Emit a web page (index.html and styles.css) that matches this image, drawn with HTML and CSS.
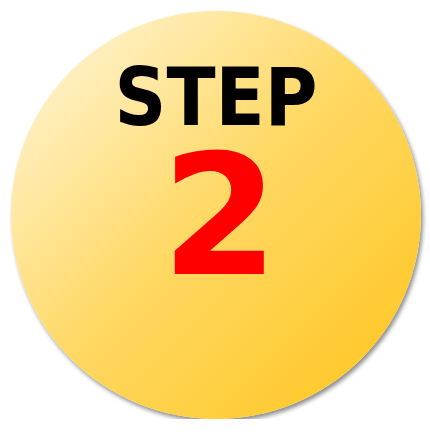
FILE: index.html
```html
<!DOCTYPE html>
<html lang="en">
<head>
    <meta charset="UTF-8">
    <meta name="viewport" content="width=device-width, initial-scale=1.0">
    <title>Step 2</title>
    <link rel="stylesheet" href="styles.css">
</head>
<body>
    <div class="badge">
        <span class="badge-label">STEP</span>
        <span class="badge-number">2</span>
    </div>
</body>
</html>
```

FILE: styles.css
```css
body {
    margin: 0;
    background-color: #ffffff;
    font-family: "DejaVu Sans", sans-serif;
    font-weight: bold;
}

.badge {
    margin: 11px 0 0 11px;
    width: 410px;
    height: 408px;
    border-radius: 50%;
    background: linear-gradient(135deg, #fff8e4 0%, #ffd862 50%, #ffc41a 100%);
    box-shadow: 2px 3px 4px rgba(0, 0, 0, 0.45);
    display: flex;
    flex-direction: column;
    align-items: center;
    padding-top: 48px;
    box-sizing: border-box;
}

.badge-label {
    font-family: "DejaVu Sans Condensed", "DejaVu Sans", sans-serif;
    font-size: 80px;
    line-height: 78px;
    color: #000000;
}

.badge-number {
    margin-left: 8px;
    font-size: 168px;
    line-height: 159px;
    color: #ff0000;
}
```
